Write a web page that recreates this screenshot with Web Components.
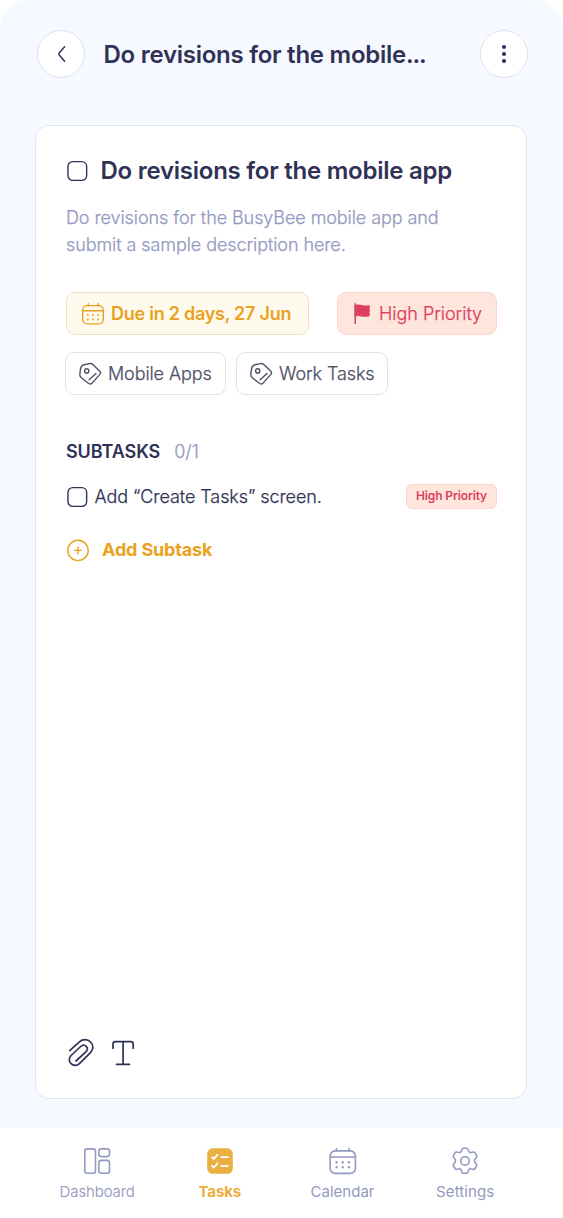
<!DOCTYPE html>
<html lang="en">
<head>
<meta charset="utf-8">
<title>BusyBee – Task</title>
<style>
html,body{margin:0;padding:0;background:#fff}
body{font-family:"Inter",sans-serif;color:#2f3256}
</style>
</head>
<body>
<task-screen></task-screen>
<script>
const S = (w,h,vb,body,attrs='') => `<svg width="${w}" height="${h}" viewBox="${vb}" fill="none" stroke="currentColor" stroke-linecap="round" stroke-linejoin="round" ${attrs}>${body}</svg>`;
const ICONS = {
  back: S(24,24,'49 42 24 24','<path d="M64.6 46.8 59.2 53.1a1.4 1.4 0 0 0 0 1.8l5.4 6.3"/>','stroke-width="1.5"'),
  more: S(24,24,'492 42 24 24','<circle cx="504" cy="47" r="2.1"/><circle cx="504" cy="54" r="2.1"/><circle cx="504" cy="61" r="2.1"/>','style="fill:currentColor;stroke:none"'),
  check: S(22,22,'0 0 22 22','<rect x="1.95" y="1.65" width="18.7" height="18.7" rx="4.8"/>','stroke-width="1.4"'),
  calendar: S(24,24,'81 301.5 24 24','<path d="M88.3 303.2v2M98.3 303.2v2"/><rect x="82.7" y="305.1" width="20.6" height="18.3" rx="4.4"/><path d="M82.7 310.2h20.6"/><path stroke-width="2" d="M87.8 314.4h.01M92.9 314.4h.01M98.1 314.4h.01M87.8 319.1h.01M92.9 319.1h.01M98.1 319.1h.01"/>','stroke-width="1.4"'),
  tag: S(24,24,'78 361.5 24 24','<path d="M84.1 364.2 89.6 363.100q1.8-.3 3.2.8l6.8 6.6q1.700 1.700.3 3.4l-7.7 8.500q-1.8 1.9-3.9.4l-7-5.6q-1.6-1.3-1.5-3.2l.7-5.700q.4-2.900 3.600-4.100z"/><circle cx="86.7" cy="370.4" r="2.1"/><path d="m89.100 379.200 6.900-6.300"/>','stroke-width="1.4"'),
  flag: S(20,24,'352 301.5 20 24','<path d="M355.2 303.2v19.8" stroke-width="1.5"/><path d="M355.2 304.800c5-1.700 7.500 1.600 14.200.3v10.300c-6.500 1.900-8.700-1.300-14.200.2z" fill="currentColor" stroke-width=".6"/>'),
  plus: S(24,24,'66 538 24 24','<circle cx="78" cy="550.4" r="10.2"/><path d="M74.6 550.4h6.800M78 547v6.800"/>','stroke-width="1.4"'),
  clip: S(30,30,'65.6 1038 30 30','<path d="M69.300 1050.600 79 1041.900C82.400 1038.900 87.300 1039 90.200 1042C93.200 1045 93.200 1049.700 90.100 1052.700L79 1063.600C76.600 1066 72.900 1066 70.600 1063.700C68.300 1061.400 68.300 1057.900 70.700 1055.500L80.300 1046.500C82 1044.900 84.400 1044.900 85.900 1046.400C87.400 1047.900 87.300 1050.100 85.700 1051.700L75.600 1061"/>','stroke-width="1.7"'),
  type: S(26,30,'110 1038 26 30','<path d="M113 1048.2v-4.200q0-2.400 2.400-2.400h15.200q2.600 0 2.600 2.400v4.200M123.100 1041.600v22.800M116.600 1064.400h12.800"/>','stroke-width="1.7"'),
  dashboard: S(28,28,'83.2 1147 28 28','<rect x="85" y="1148.9" width="10.7" height="24.3" rx="2.5"/><rect x="99" y="1148.9" width="10.7" height="7.7" rx="2.5"/><rect x="99" y="1160.4" width="10.7" height="12.8" rx="2.5"/>','stroke-width="1.6"'),
  tasks: S(28,28,'206 1147 28 28','<rect x="207.2" y="1148.3" width="25.6" height="25.5" rx="5.5" fill="currentColor" stroke="none"/><path stroke="#fff" d="m212 1157.300 1.800 1.600 3.700-4.200M221.300 1157.200h6.600M212 1165.900l1.800 1.600 3.700-4.200M221.300 1165.900h6.600"/>','stroke-width="1.8"'),
  calendarNav: S(28,28,'328.9 1147 28 28','<path d="M336.300 1148.500v2.200M349 1148.500v2.200"/><rect x="330" y="1150.900" width="25.300" height="22.500" rx="5.200"/><path d="M330 1157h25.300"/><path stroke-width="2.4" d="M336.500 1162.300h.01M342.600 1162.300h.01M348.800 1162.300h.01M336.500 1167.200h.01M342.600 1167.200h.01M348.800 1167.200h.01"/>','stroke-width="1.6"'),
  gear: S(28,28,'451.3 1146.9 28 28','<path d="M462 1150q.2-1.900 2-1.900h2.600q1.800 0 2 1.900c.2 2.200 2 3.100 3.900 2.200q1.900-.9 2.800.6l1.500 2.500q.9 1.600-.6 2.700c-1.900 1.300-1.900 3.900 0 5.200q1.500 1.100.6 2.700l-1.500 2.500q-.9 1.500-2.800.6c-1.900-.9-3.700 0-3.900 2.200q-.2 2-2 2H464q-1.800 0-2-2c-.2-2.200-2-3.100-3.900-2.200q-1.900.9-2.800-.6l-1.500-2.500q-.9-1.600.6-2.700c1.900-1.300 1.900-3.900 0-5.200q-1.500-1.100-.6-2.700l1.500-2.500q.9-1.500 2.800-.6c1.900.9 3.700 0 3.900-2.200z"/><circle cx="465.3" cy="1160.8" r="4.2"/>','stroke-width="1.6"')
};
function define(name, css, html){
  customElements.define(name, class extends HTMLElement{
    constructor(){
      super();
      this.attachShadow({mode:'open'}).innerHTML = `<style>${css}</style>${html}`;
    }
  });
}
customElements.define('ui-icon', class extends HTMLElement{
  connectedCallback(){
    if(this.shadowRoot) return;
    this.attachShadow({mode:'open'}).innerHTML = `<style>:host{display:block;flex:none}svg{display:block}</style>${ICONS[this.getAttribute('name')]}`;
  }
});
define('round-button', `:host{display:flex;flex:none;box-sizing:border-box;width:48px;height:48px;border:1px solid #e0e2ee;border-radius:50%;background:#fff;align-items:center;justify-content:center}`, `<slot></slot>`);
define('screen-header', `:host{display:flex;align-items:center;height:48px;padding:30px 35px 0 37px}
h1{flex:1;margin:0 0 0 18.5px;padding-top:2px;font-size:24px;line-height:30px;font-weight:600;white-space:nowrap;letter-spacing:-.26px}
i{font-style:normal;letter-spacing:-1.1px}`,
`<round-button><ui-icon name="back"></ui-icon></round-button><h1>Do revisions for the mobile<i>...</i></h1><round-button><ui-icon name="more"></ui-icon></round-button>`);
define('info-chip', `:host{display:flex;box-sizing:border-box;height:43px;align-items:center;border:1px solid #e3e2f0;border-radius:9px;background:#fff;color:#4e5066;font-size:18px;line-height:22px;font-weight:300;-webkit-text-stroke:.25px currentColor;letter-spacing:-.1px;white-space:nowrap;padding-left:12px;gap:6px}
:host([kind=due]){background:#fffaee;border-color:#f0dfc4;color:#eaa11d;font-weight:600;-webkit-text-stroke:0;letter-spacing:-.25px;padding-left:14px}
:host([kind=high]){background:#ffe6dd;border-color:#ffd2cb;color:#dc405c;letter-spacing:-.03px;padding-left:14px;gap:7px}`, `<slot></slot>`);
define('sub-task', `:host{display:flex;align-items:center;height:26px}
.t{margin-left:6.5px;font-size:18px;line-height:24px;font-weight:300;-webkit-text-stroke:.25px currentColor;letter-spacing:-.07px;flex:1;white-space:nowrap}
.b{box-sizing:border-box;width:91px;height:25px;margin-bottom:1px;border:1px solid #ffd2cb;border-radius:6px;background:#ffe6dd;color:#dc405c;font-size:12px;line-height:22px;font-weight:600;letter-spacing:-.12px;text-align:center;white-space:nowrap}`,
`<ui-icon name="check"></ui-icon><span class="t"><slot></slot></span><span class="b"><slot name="priority"></slot></span>`);
define('task-card', `:host{display:flex;flex-direction:column;box-sizing:border-box;margin:47px 36px 0 35px;height:974px;border:1px solid #e2e5f1;border-radius:14px;background:#fff;padding:29px 29px 30px 30px}
.title{display:flex;align-items:center;height:32px}
h2{margin:0 0 0 12.5px;font-size:24px;line-height:32px;font-weight:600;white-space:nowrap;letter-spacing:-.25px}
.desc{margin:17px 0 0;font-size:18px;line-height:27px;color:#9499c1;white-space:nowrap;font-weight:300;-webkit-text-stroke:.25px currentColor;letter-spacing:-.08px}
.row{display:flex}
.a{margin:34px 0 0;justify-content:space-between;align-items:center}
.c{margin:17px 0 0 -1px;gap:10px}
.due{width:243px}.high{width:160px}.mobile{width:161px}.work{width:152px}
.sub{display:flex;gap:14px;margin-top:44px;font-size:18px;line-height:26px;font-weight:600;letter-spacing:-.1px}
.n{font-weight:300;-webkit-text-stroke:.25px currentColor;letter-spacing:.1px;color:#9499c1}
sub-task{margin-top:19px}
.add{display:flex;align-items:center;gap:12px;margin-top:28px;color:#eaa11d;font-size:18px;line-height:24px;font-weight:700;letter-spacing:-.15px}
.tools{display:flex;gap:14px;margin-top:auto}`,
`<div class="title"><ui-icon name="check"></ui-icon><h2>Do revisions for the mobile app</h2></div>
<p class="desc">Do revisions for the BusyBee mobile app and<br>submit a sample description here.</p>
<div class="row a"><info-chip kind="due" class="due"><ui-icon name="calendar"></ui-icon><span>Due in 2 days, 27 Jun</span></info-chip><info-chip kind="high" class="high"><ui-icon name="flag"></ui-icon><span>High Priority</span></info-chip></div>
<div class="row c"><info-chip class="mobile"><ui-icon name="tag"></ui-icon><span>Mobile Apps</span></info-chip><info-chip class="work"><ui-icon name="tag"></ui-icon><span>Work Tasks</span></info-chip></div>
<div class="sub"><span>SUBTASKS</span><span class="n">0/1</span></div>
<sub-task>Add “Create Tasks” screen.<span slot="priority">High Priority</span></sub-task>
<div class="add"><ui-icon name="plus"></ui-icon><span>Add Subtask</span></div>
<div class="tools"><ui-icon name="clip"></ui-icon><ui-icon name="type"></ui-icon></div>`);
define('nav-item', `:host{display:flex;flex-direction:column;align-items:center;width:122.7px;color:#9499c1;font-size:15px;line-height:20px;white-space:nowrap}
:host([active]){color:#ebae40;font-weight:700;letter-spacing:-.1px}
:host([light]){font-weight:300;-webkit-text-stroke:.15px currentColor;letter-spacing:-.1px}
.l{margin-top:7px}`, `<slot name="icon"></slot><span class="l"><slot></slot></span>`);
define('bottom-nav', `:host{display:flex;box-sizing:border-box;margin-top:auto;height:90px;background:#fff;padding:19px 0 0 35.8px}`,
`<nav-item light><ui-icon slot="icon" name="dashboard"></ui-icon>Dashboard</nav-item>
<nav-item active><ui-icon slot="icon" name="tasks"></ui-icon>Tasks</nav-item>
<nav-item><ui-icon slot="icon" name="calendarNav"></ui-icon>Calendar</nav-item>
<nav-item style="letter-spacing:.1px"><ui-icon slot="icon" name="gear"></ui-icon>Settings</nav-item>`);
define('task-screen', `:host{display:flex;flex-direction:column;width:563px;height:1218px;overflow:hidden;background:#f6f9ff;border-radius:28px 28px 0 0}`,
`<screen-header></screen-header><task-card></task-card><bottom-nav></bottom-nav>`);
</script>
</body>
</html>
